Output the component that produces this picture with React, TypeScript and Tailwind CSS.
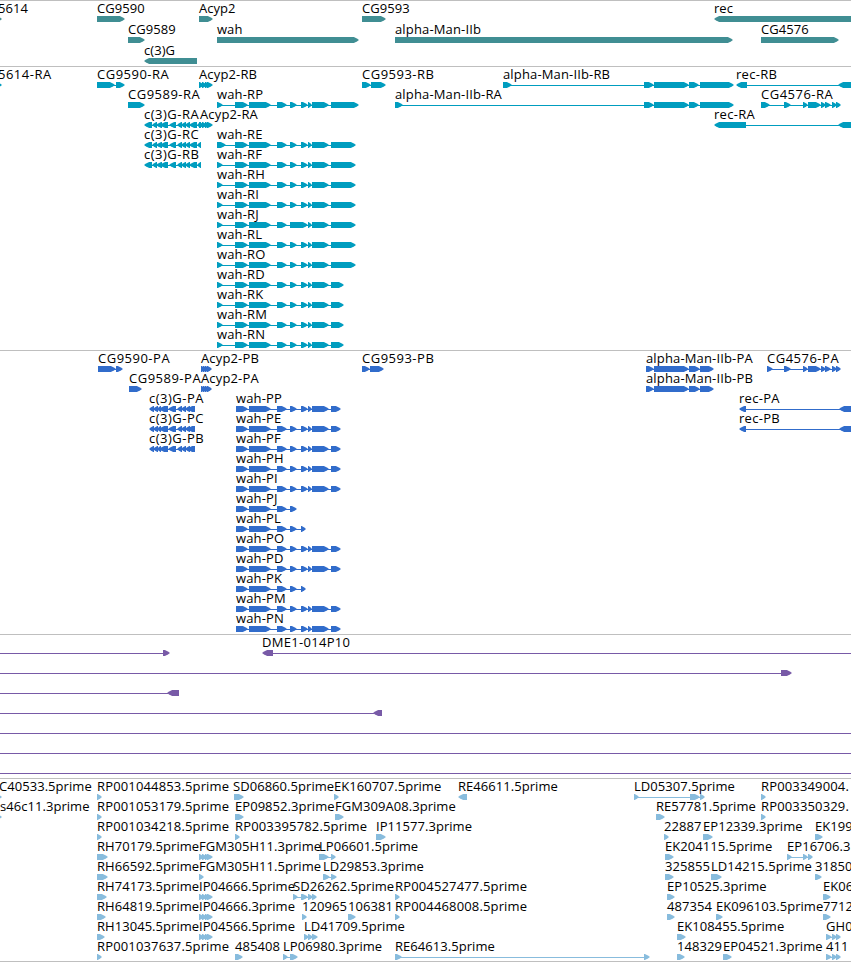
import clsx from "clsx";

type Span = [number, number];

interface Feature {
  // left edge of the label
  x: number;
  label?: string;
  spans: Span[];
  reverse?: boolean;
  // connector line, when it runs past the outer spans
  line?: Span;
}

interface TrackProps {
  rows: Feature[][];
  color: string;
  rowClassName?: string;
  className?: string;
}

const VIEW_WIDTH = 851;

const f = (x: number, label: string, ...spans: Span[]): Feature => ({ x, label, spans });
const r = (x: number, label: string, ...spans: Span[]): Feature => ({
  x,
  label,
  spans,
  reverse: true,
});

const genes: Feature[][] = [
  [
    f(-2, "5614", [-10, 2]),
    f(97, "CG9590", [97, 125]),
    f(199, "Acyp2", [199, 213]),
    f(362, "CG9593", [362, 386]),
    r(714, "rec", [714, 870]),
  ],
  [
    f(128, "CG9589", [128, 145]),
    f(217, "wah", [217, 359]),
    f(395, "alpha-Man-IIb", [395, 733]),
    f(761, "CG4576", [761, 839]),
  ],
  [r(144, "c(3)G", [144, 197])],
];

// shared exon layouts
const wahMid: Span[] = [[277, 287], [290, 297], [301, 308], [308, 312], [312, 329]];
const wahLong: Span[] = [[217, 223], [235, 248], [249, 271], ...wahMid, [331, 356]];
const wahShort: Span[] = [[217, 223], [235, 248], [249, 271], ...wahMid, [331, 344]];
const wahCds: Span[] = [[236, 248], [249, 271], ...wahMid, [331, 341]];
const alphaTail: Span[] = [[644, 654], [654, 689], [689, 699], [700, 734]];
const alphaCds: Span[] = [[646, 654], [654, 689], [689, 700], [700, 714]];
const cg4576Tail: Span[] = [
  [784, 791], [803, 808], [808, 821], [821, 826], [825, 831], [832, 837], [836, 841],
];
const c3g: Span[] = [
  [144, 152], [152, 157], [156, 162], [160, 168], [169, 176],
  [177, 182], [181, 186], [185, 190], [189, 197], [197, 201],
];
const c3gCds: Span[] = [
  [149, 154], [153, 158], [157, 161], [159, 168], [168, 176],
  [177, 182], [181, 186], [185, 190], [187, 195],
];
const acyp2: Span[] = [[199, 204], [202, 207], [205, 210], [207, 213]];
const acyp2Cds: Span[] = [[201, 206], [203, 208], [205, 210], [207, 212]];

const transcripts: Feature[][] = [
  [
    f(-2, "5614-RA", [-10, 2]),
    f(97, "CG9590-RA", [97, 115], [116, 125]),
    f(199, "Acyp2-RB", ...acyp2),
    f(362, "CG9593-RB", [362, 371], [371, 386]),
    f(503, "alpha-Man-IIb-RB", [503, 512], ...alphaTail),
    r(736, "rec-RB", [736, 747], [838, 870]),
  ],
  [
    f(128, "CG9589-RA", [128, 145]),
    f(217, "wah-RP", [217, 223], [235, 248], [249, 271], ...wahMid, [331, 359]),
    f(395, "alpha-Man-IIb-RA", [395, 403], ...alphaTail),
    f(761, "CG4576-RA", [761, 770], ...cg4576Tail),
  ],
  [
    r(144, "c(3)G-RA", ...c3g),
    f(200, "Acyp2-RA", ...acyp2),
    r(714, "rec-RA", [714, 746], [838, 870]),
  ],
  [
    r(144, "c(3)G-RC", ...c3g),
    f(217, "wah-RE", [217, 226], [235, 248], [249, 271], ...wahMid, [331, 356]),
  ],
  [r(144, "c(3)G-RB", ...c3g), f(217, "wah-RF", ...wahLong)],
  [f(217, "wah-RH", ...wahLong)],
  [f(217, "wah-RI", ...wahLong)],
  [
    f(
      217, "wah-RJ",
      [217, 223], [235, 248], [249, 271], [277, 287], [290, 308], [308, 312], [312, 329], [331, 356],
    ),
  ],
  [f(217, "wah-RL", ...wahLong)],
  [f(217, "wah-RO", ...wahLong)],
  [f(217, "wah-RD", ...wahShort)],
  [f(217, "wah-RK", ...wahShort)],
  [f(217, "wah-RM", ...wahShort)],
  [f(217, "wah-RN", ...wahShort)],
];

const codingRegions: Feature[][] = [
  [
    f(98, "CG9590-PA", [98, 116], [116, 123]),
    f(201, "Acyp2-PB", ...acyp2Cds),
    f(362, "CG9593-PB", [362, 370], [370, 384]),
    f(646, "alpha-Man-IIb-PA", ...alphaCds),
    f(767, "CG4576-PA", [767, 773], ...cg4576Tail),
  ],
  [
    f(129, "CG9589-PA", [129, 142]),
    f(201, "Acyp2-PA", ...acyp2Cds),
    f(646, "alpha-Man-IIb-PB", ...alphaCds),
  ],
  [
    r(149, "c(3)G-PA", ...c3gCds),
    f(236, "wah-PP", ...wahCds),
    r(739, "rec-PA", [739, 746], [839, 870]),
  ],
  [
    r(149, "c(3)G-PC", ...c3gCds),
    f(236, "wah-PE", ...wahCds),
    r(739, "rec-PB", [739, 746], [839, 870]),
  ],
  [r(149, "c(3)G-PB", ...c3gCds), f(236, "wah-PF", ...wahCds)],
  [f(236, "wah-PH", ...wahCds)],
  [f(236, "wah-PI", ...wahCds)],
  [f(236, "wah-PJ", ...wahCds.slice(0, 4))],
  [f(236, "wah-PL", ...wahCds.slice(0, 4), [301, 306])],
  [f(236, "wah-PO", ...wahCds)],
  [f(236, "wah-PD", ...wahCds)],
  [f(236, "wah-PK", ...wahCds.slice(0, 4), [301, 306])],
  [f(236, "wah-PM", ...wahCds)],
  [f(236, "wah-PN", ...wahCds)],
];

const bacs: Feature[][] = [
  [
    { x: 0, spans: [[163, 170]], line: [0, 163] },
    { x: 262, label: "DME1-014P10", spans: [[262, 273]], reverse: true, line: [273, 851] },
  ],
  [{ x: 0, spans: [[781, 792]], line: [0, 781] }],
  [{ x: 0, spans: [[167, 179]], reverse: true, line: [0, 168] }],
  [{ x: 0, spans: [[373, 382]], reverse: true, line: [0, 374] }],
  [{ x: 0, spans: [], line: [0, 851] }],
  [{ x: 0, spans: [], line: [0, 851] }],
  [{ x: 0, spans: [], line: [0, 851] }],
];

const ests: Feature[][] = [
  [
    f(-1, "C40533.5prime", [-8, 2]),
    f(97, "RP001044853.5prime", [97, 102]),
    f(233, "SD06860.5prime", [234, 244]),
    f(334, "EK160707.5prime", [334, 339]),
    r(458, "RE46611.5prime", [458, 467]),
    f(634, "LD05307.5prime", [634, 639], [690, 700], [700, 705]),
    f(761, "RP003349004.", [761, 766]),
  ],
  [
    f(0, "s46c11.3prime", [-8, 2]),
    f(97, "RP001053179.5prime", [97, 102]),
    f(235, "EP09852.3prime", [235, 244]),
    f(335, "FGM309A08.3prime", [335, 344]),
    f(656, "RE57781.5prime", [656, 665]),
    f(761, "RP003350329.", [761, 766]),
  ],
  [
    f(97, "RP001034218.5prime", [97, 102]),
    f(235, "RP003395782.5prime", [235, 240]),
    f(376, "IP11577.3prime", [376, 386]),
    f(664, "22887", [664, 669]),
    f(703, "EP12339.3prime", [703, 713]),
    f(815, "EK199", [815, 823]),
  ],
  [
    f(97, "RH70179.5prime", [97, 108]),
    f(199, "FGM305H11.3prime", ...acyp2),
    f(319, "LP06601.5prime", [319, 329], [331, 336]),
    f(665, "EK204115.5prime", [665, 674]),
    f(787, "EP16706.3", [787, 792], [803, 808], [808, 813]),
  ],
  [
    f(97, "RH66592.5prime", [97, 108]),
    f(199, "FGM305H11.5prime", [199, 204]),
    f(323, "LD29853.3prime", [323, 330], [331, 337]),
    f(665, "325855", [665, 674]),
    f(711, "LD14215.5prime", [711, 722]),
    f(815, "31850", [815, 822]),
  ],
  [
    f(97, "RH74173.5prime", [97, 107]),
    f(199, "IP04666.5prime", ...acyp2),
    f(293, "SD26262.5prime", [293, 298], [301, 308], [308, 313], [312, 317]),
    f(395, "RP004527477.5prime", [395, 400]),
    f(667, "EP10525.3prime", [667, 675]),
    f(823, "EK06", [823, 831]),
  ],
  [
    f(97, "RH64819.5prime", [97, 106]),
    f(199, "IP04666.3prime", ...acyp2),
    f(302, "120965", [302, 307]),
    f(348, "106381", [348, 356]),
    f(395, "RP004468008.5prime", [395, 400]),
    f(667, "487354", [667, 675]),
    f(716, "EK096103.5prime", [716, 723]),
    f(823, "7712", [823, 831]),
  ],
  [
    f(97, "RH13045.5prime", [97, 105]),
    f(199, "IP04566.5prime", ...acyp2),
    f(304, "LD41709.5prime", [304, 309], [308, 313], [312, 318]),
    f(677, "EK108455.5prime", [677, 686]),
    f(826, "GH0", [826, 832], [832, 837], [836, 841]),
  ],
  [
    f(97, "RP001037637.5prime", [97, 102]),
    f(235, "485408", [235, 243]),
    f(283, "LP06980.3prime", [283, 288], [290, 298]),
    f(395, "RE64613.5prime", [395, 402], [644, 650]),
    f(677, "148329", [677, 685]),
    f(723, "EP04521.3prime", [723, 732]),
    f(826, "411", [826, 832], [832, 837], [836, 841]),
  ],
];

// block with a blunt pointed head on the strand side
const arrowPoints = ([start, end]: Span, reverse?: boolean) => {
  const head = Math.min(6, end - start);
  const [base, tip, dir] = reverse ? [end, start, -1] : [start, end, 1];
  const neck = tip - dir * head * 0.85;
  const cheek = tip - dir * head * 0.35;
  return `${base},0 ${neck},0 ${cheek},1.4 ${tip},3 ${cheek},4.6 ${neck},6 ${base},6`;
};

const trackingFor = (label: string) => {
  if (/^(CG|c\(3\)|5614).*-/.test(label)) return "tracking-[0.5px]";
  if (/^(rec|DME1)-/.test(label)) return "tracking-[0.3px]";
  if (/^RP00|-/.test(label)) return "tracking-[0.15px]";
  return "tracking-[0.05px]";
};

const Glyph = ({ feature }: { feature: Feature }) => {
  const { spans, reverse } = feature;
  const line = feature.line ?? [spans[0][0] + 1, spans[spans.length - 1][1] - 2];

  return (
    <g>
      {(feature.line || spans.length > 1) && (
        <rect x={line[0]} y={3} width={line[1] - line[0]} height={1} />
      )}
      {spans.map((span, i) => (
        <polygon key={i} points={arrowPoints(span, reverse)} />
      ))}
    </g>
  );
};

const Track = ({ rows, color, rowClassName = "h-5", className }: TrackProps) => {
  return (
    <section className={clsx("border-t border-[#bfbfbf]", className)}>
      {rows.map((row, i) => (
        <div key={i} className={clsx("relative", rowClassName)}>
          <svg
            className={clsx("absolute left-0 top-[15px] fill-current", color)}
            width={VIEW_WIDTH}
            height={6}
          >
            {row.map((feature, j) => (
              <Glyph key={j} feature={feature} />
            ))}
          </svg>
          {row.map(
            (feature, j) =>
              feature.label && (
                <span
                  key={j}
                  className={clsx("absolute top-0 whitespace-nowrap", trackingFor(feature.label))}
                  style={{ left: feature.x }}
                >
                  {feature.label}
                </span>
              ),
          )}
        </div>
      ))}
    </section>
  );
};

const App = () => {
  return (
    <main className="h-[962px] w-[851px] overflow-hidden bg-white font-['Open_Sans',sans-serif] text-[13px] leading-[15px] text-black">
      <Track rows={genes} color="text-[#408e93]" rowClassName="h-[21px]" className="pb-[2px]" />
      <Track rows={transcripts} color="text-[#009dbf]" className="pb-[3px]" />
      <Track rows={codingRegions} color="text-[#316ccb]" className="pb-[3px]" />
      <Track rows={bacs} color="text-[#785aa7]" className="pb-[3px]" />
      <Track rows={ests} color="text-[#88bcdd]" className="border-b pb-[2px]" />
    </main>
  );
};

export default App;
